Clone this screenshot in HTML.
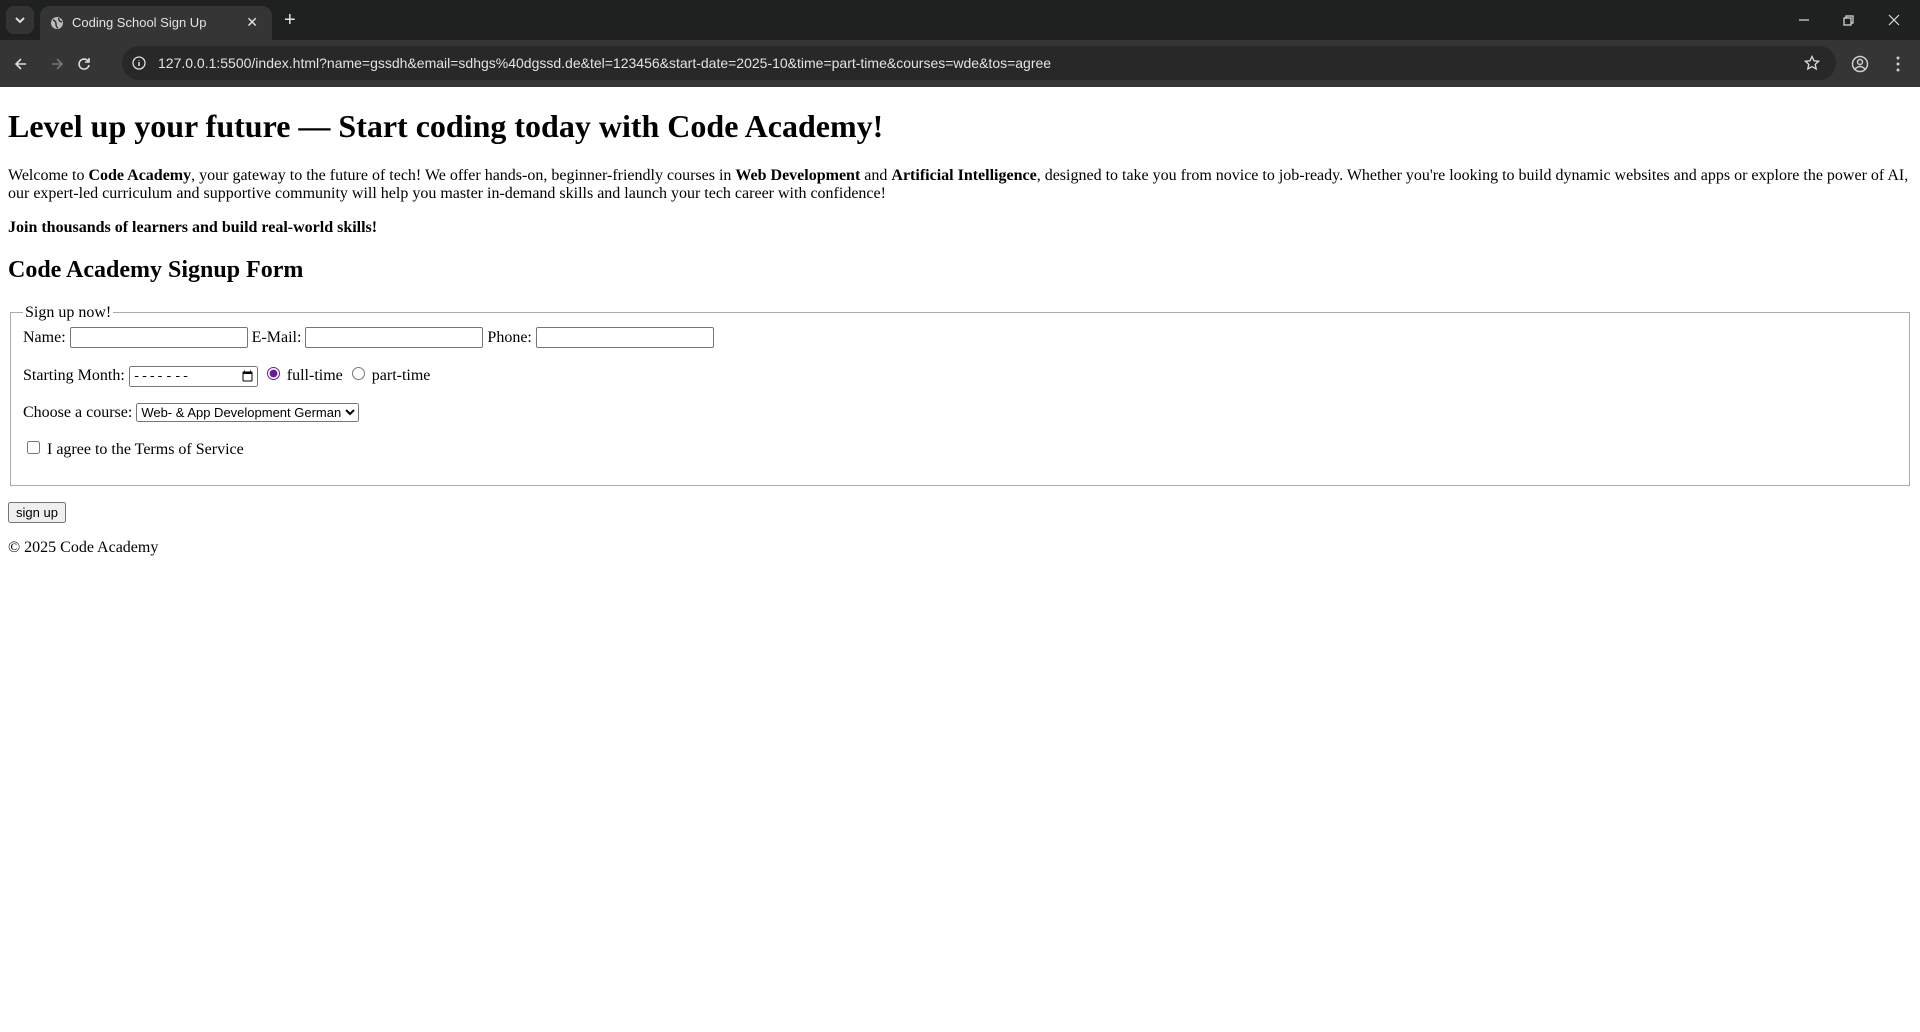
<!DOCTYPE html>
<html><head><meta charset="utf-8"><style>
html,body{margin:0;padding:0;background:#fff;}
#chrome{position:relative;height:87px;background:#1f2020;font-family:"Liberation Sans",sans-serif;}
#tabbar{height:40px;position:relative;}
.dd{position:absolute;left:6px;top:6px;width:28px;height:28px;background:#333;border-radius:8px;}
.tab{position:absolute;left:40px;top:6px;width:232px;height:34px;background:#353535;border-radius:10px 10px 0 0;color:#e3e3e3;font-size:13px;}
.tab .t{position:absolute;left:32px;top:9px;}
.tab .x{position:absolute;right:14px;top:8px;font-size:14px;}
.plus{position:absolute;left:284px;top:9px;color:#e3e3e3;font-size:20px;}
#toolbar{position:absolute;top:40px;left:0;right:0;height:47px;background:#353535;}
.url{position:absolute;left:122px;top:6px;width:1714px;height:34px;background:#282828;border-radius:17px;color:#e3e3e3;font-size:14px;}
.url span{position:absolute;left:36px;top:9px;}
.ico{position:absolute;}
#page{font-family:"Liberation Serif",serif;font-size:16px;margin:8px;color:#000;}
h1{font-size:2em;margin:.67em 0;}
h2{font-size:1.5em;margin:.83em 0;}
p{margin:1em 0;}
fieldset{margin:0 2px;padding:.35em .75em .625em;border:1px solid #aaa;}
legend{padding:0 2px;}
input[type=text]{width:172px;height:17px;border:1px solid #767676;border-radius:2px;padding:1px 2px;font-size:13px;}
input[type=month]{font-size:13px;}
select{font-family:"Liberation Sans",sans-serif;font-size:13px;}
button{font-family:"Liberation Sans",sans-serif;font-size:13px;}
</style></head><body>
<div id="chrome">
 <div id="tabbar">
  <div class="dd"><svg class="ico" style="left:8px;top:9px" width="12" height="10"><path d="M2 3l4 4 4-4" stroke="#ddd" stroke-width="2" fill="none"/></svg></div>
  <div class="tab">
   <svg class="ico" style="left:10px;top:10px" width="14" height="14"><circle cx="7" cy="7" r="6" fill="#bbb"/><path d="M3 4q3 1 3 4t2 4M9 2q-1 3 3 4" stroke="#353535" stroke-width="1.5" fill="none"/></svg>
   <span class="t">Coding School Sign Up</span><span class="x">✕</span></div>
  <span class="plus">+</span>
  <svg class="ico" style="left:1797px;top:14px" width="140" height="14"><path d="M2 6h10" stroke="#ddd" stroke-width="1.2"/><path d="M47 4h7v7h-7zM49 4v-2h7v7h-2" stroke="#ddd" stroke-width="1.2" fill="none"/><path d="M92 1l10 10M102 1l-10 10" stroke="#ddd" stroke-width="1.2"/></svg>
 </div>
 <div id="toolbar">
  <svg class="ico" style="left:14px;top:16px" width="80" height="16"><path d="M12 8H3M7 3L2 8l5 5" stroke="#ddd" stroke-width="1.6" fill="none"/><path d="M38 8h9M43 3l5 5-5 5" stroke="#777" stroke-width="1.6" fill="none"/><path d="M74 5a5 5 0 1 0 1 4M75 2v4h-4" stroke="#ddd" stroke-width="1.6" fill="none"/></svg>
  <div class="url"><svg class="ico" style="left:10px;top:10px" width="14" height="14"><circle cx="7" cy="7" r="6" stroke="#ddd" stroke-width="1.3" fill="none"/><path d="M7 6v4M7 4v.5" stroke="#ddd" stroke-width="1.5"/></svg><span>127.0.0.1:5500/index.html?name=gssdh&amp;email=sdhgs%40dgssd.de&amp;tel=123456&amp;start-date=2025-10&amp;time=part-time&amp;courses=wde&amp;tos=agree</span>
  <svg class="ico" style="left:1682px;top:9px" width="16" height="16"><path d="M8 1.5l2 4.3 4.6.5-3.4 3.1 1 4.6L8 11.6 3.8 14l1-4.6L1.4 6.3 6 5.8z" stroke="#ddd" stroke-width="1.3" fill="none"/></svg></div>
  <svg class="ico" style="left:1850px;top:14px" width="60" height="20"><circle cx="10" cy="10" r="7.5" stroke="#ccc" stroke-width="1.5" fill="none"/><circle cx="10" cy="8" r="2.5" stroke="#ccc" stroke-width="1.5" fill="none"/><path d="M5 15q5-5 10 0" stroke="#ccc" stroke-width="1.5" fill="none"/><circle cx="48" cy="4" r="1.5" fill="#ccc"/><circle cx="48" cy="10" r="1.5" fill="#ccc"/><circle cx="48" cy="16" r="1.5" fill="#ccc"/></svg>
 </div>
</div>
<div id="page">
<h1>Level up your future — Start coding today with Code Academy!</h1>
<p>Welcome to <b>Code Academy</b>, your gateway to the future of tech! We offer hands-on, beginner-friendly courses in <b>Web Development</b> and <b>Artificial Intelligence</b>, designed to take you from novice to job-ready. Whether you're looking to build dynamic websites and apps or explore the power of AI, our expert-led curriculum and supportive community will help you master in-demand skills and launch your tech career with confidence!</p>
<p><b>Join thousands of learners and build real-world skills!</b></p>
<h2>Code Academy Signup Form</h2>
<form>
<fieldset><legend>Sign up now!</legend>
Name: <input type="text"> E-Mail: <input type="text"> Phone: <input type="text">
<p>Starting Month: <input type="month" style="width:124px"> <input type="radio" name="t" checked style="accent-color:#6a1b9a"> full-time <input type="radio" name="t"> part-time</p>
<p>Choose a course: <select><option>Web- &amp; App Development German</option></select></p>
<p><input type="checkbox"> I agree to the Terms of Service</p>
</fieldset>
<p><button type="button">sign up</button></p>
</form>
<p>© 2025 Code Academy</p>
</div>
</body></html>
